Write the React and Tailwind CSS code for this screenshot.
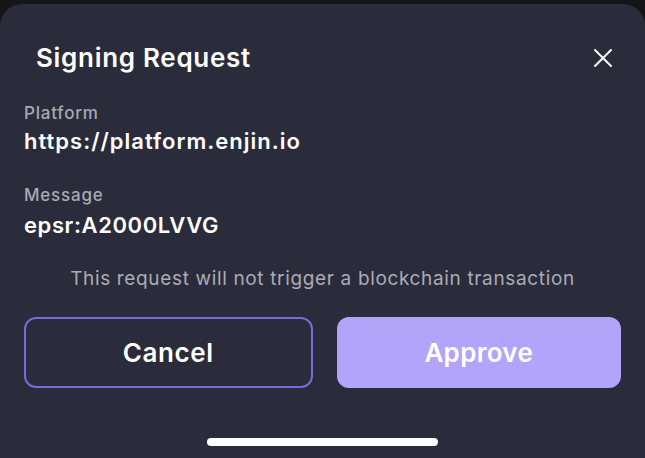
export default function App() {
  return (
    <div className="h-[458px] w-[645px] overflow-hidden bg-[#141419] pt-[4px]" style={{ fontFamily: "Inter, 'Noto Sans', sans-serif" }}>
      <div className="flex h-[454px] flex-col rounded-t-[22px] bg-[#2a2b3b] px-[24px] pt-[38px]">
        <div className="flex h-[32px] items-center justify-between pl-[12px]">
          <h1 className="text-[26px] font-semibold leading-[32px] tracking-[0.7px] text-white">Signing Request</h1>
          <button className="mr-[8px] flex h-[20px] w-[20px] items-center justify-center">
            <svg width="20" height="20" viewBox="0 0 20 20" fill="none" stroke="white" strokeWidth="2" strokeLinecap="round">
              <path d="M2 2L18 18M18 2L2 18" />
            </svg>
          </button>
        </div>
        <div className="mt-[29px] text-[17px] font-medium leading-[20px] tracking-[0.8px] text-[#a9aab4]">Platform</div>
        <div className="mt-[4px] text-[22px] font-semibold leading-[28px] tracking-[1px] text-white">https://platform.enjin.io</div>
        <div className="mt-[30px] text-[17px] font-medium leading-[20px] tracking-[0.8px] text-[#a9aab4]">Message</div>
        <div className="mt-[6px] text-[22px] font-semibold leading-[28px] tracking-[0.6px] text-white">epsr:A2000LVVG</div>
        <p className="mt-[28px] text-center text-[19px] leading-[24px] tracking-[0.65px] text-[#abacb6]">This request will not trigger a blockchain transaction</p>
        <div className="mt-[26px] flex gap-[24px]">
          <button className="flex h-[71px] flex-1 items-center justify-center rounded-[12px] border-2 border-[#7a69d6] text-[26px] font-semibold tracking-[0.6px] text-white">Cancel</button>
          <button className="flex h-[71px] flex-1 items-center justify-center rounded-[12px] bg-[#b3a4fb] text-[26px] font-semibold tracking-[0.3px] text-white">Approve</button>
        </div>
        <div className="mt-[50px] flex justify-center">
          <div className="h-[8px] w-[231px] rounded-full bg-white" />
        </div>
      </div>
    </div>
  );
}
